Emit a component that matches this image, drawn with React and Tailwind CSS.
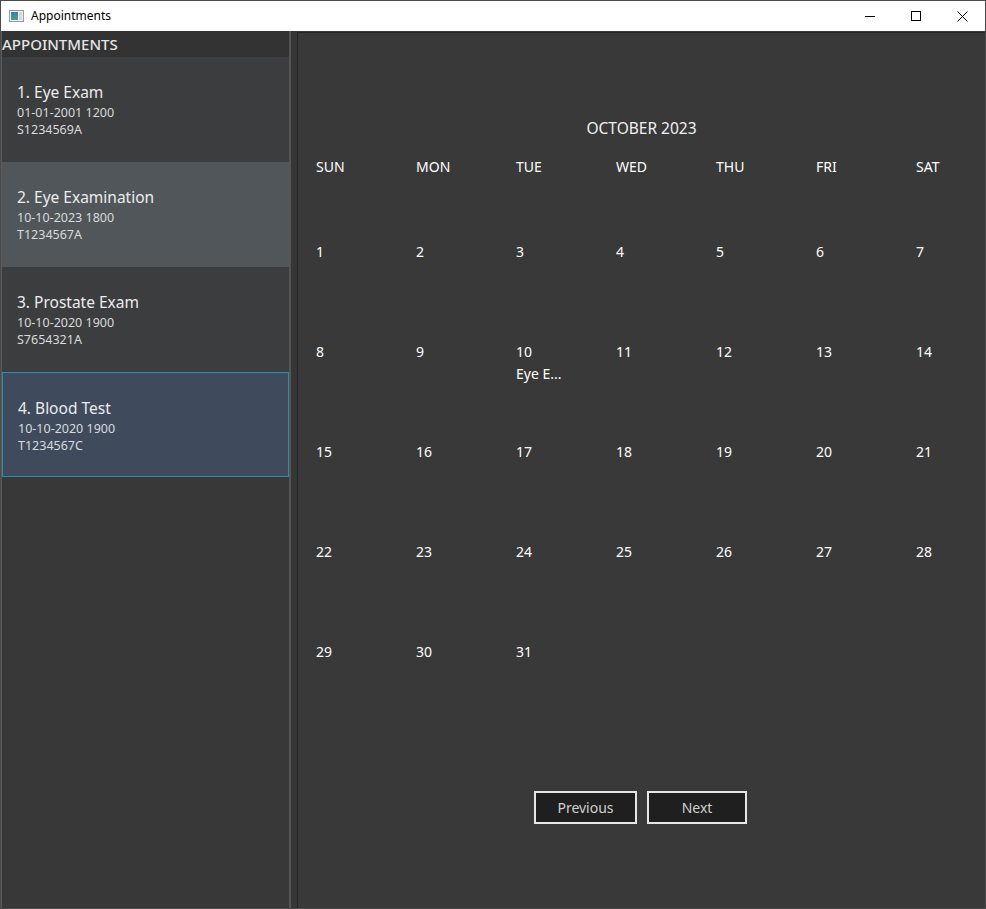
import React from "react";

const cards = [
  { t: "1. Eye Exam", d: "01-01-2001 1200", id: "S1234569A", bg: "bg-[#3c3d3f]", sel: false },
  { t: "2. Eye Examination", d: "10-10-2023 1800", id: "T1234567A", bg: "bg-[#505659]", sel: false },
  { t: "3. Prostate Exam", d: "10-10-2020 1900", id: "S7654321A", bg: "bg-[#3c3d3f]", sel: false },
  { t: "4. Blood Test", d: "10-10-2020 1900", id: "T1234567C", bg: "bg-[#3f4b5d]", sel: true },
];

const days = ["SUN", "MON", "TUE", "WED", "THU", "FRI", "SAT"];

function buildWeeks() {
  const weeks = [];
  let d = 1;
  for (let w = 0; w < 5; w++) {
    const row = [];
    for (let i = 0; i < 7; i++) {
      row.push(d <= 31 ? d : null);
      d++;
    }
    weeks.push(row);
  }
  return weeks;
}

export default function App() {
  const weeks = buildWeeks();
  return (
    <div
      className="w-[986px] h-[909px] flex flex-col border border-[#4a4a4a] bg-[#383838] overflow-hidden"
      style={{ fontFamily: '"Noto Sans", "Open Sans", sans-serif' }}
    >
      {/* Title bar */}
      <div className="h-[30px] bg-white flex items-center shrink-0">
        <div className="ml-[8px] w-[15px] h-[12px] border border-[#9a9a9a] bg-[#f2f2f2] flex items-stretch p-[1px] gap-[1px]">
          <div className="w-[7px] bg-gradient-to-b from-[#3b7ac4] to-[#4aa37a]" />
          <div className="flex-1 bg-[#d8d8d8]" />
        </div>
        <span className="ml-[7px] text-[12px] text-black leading-none">Appointments</span>
        <div className="ml-auto flex h-full">
          <div className="w-[46px] h-full flex items-center justify-center">
            <div className="w-[10px] h-[1px] bg-black" />
          </div>
          <div className="w-[46px] h-full flex items-center justify-center">
            <div className="w-[10px] h-[10px] border border-black" />
          </div>
          <div className="w-[46px] h-full flex items-center justify-center">
            <svg width="11" height="11" viewBox="0 0 11 11">
              <path d="M0.5 0.5 L10.5 10.5 M10.5 0.5 L0.5 10.5" stroke="black" strokeWidth="1" />
            </svg>
          </div>
        </div>
      </div>

      {/* Body */}
      <div className="flex flex-1 min-h-0 bg-[#383838]">
        {/* Left panel */}
        <div className="w-[288px] flex flex-col border-l-[1px] border-[#5a5a5a]">
          <div className="h-[26px] bg-[#333333] flex items-center text-[15px] text-[#e4e4e4] font-medium">
            APPOINTMENTS
          </div>
          {cards.map((c) => (
            <div
              key={c.t}
              className={`h-[105px] ${c.bg} ${c.sel ? "border border-[#2c8ea3] pl-[15px] pt-[2px]" : "pl-[15px]"} flex flex-col justify-center`}
            >
              <div className="text-[15.5px] leading-[20px] text-[#ececec] mb-[2px]">{c.t}</div>
              <div className="text-[12.5px] leading-[17px] text-[#dadada]">{c.d}</div>
              <div className="text-[12.5px] leading-[17px] text-[#dadada]">{c.id}</div>
            </div>
          ))}
        </div>

        {/* Divider */}
        <div className="w-[2px] bg-[#555555]" />
        <div className="w-[6px] bg-[#363636]" />

        {/* Calendar panel */}
        <div className="flex-1 min-w-0 bg-[#393939] border-l border-t border-[#262626] mt-[1px] flex flex-col overflow-hidden text-white">
          <div className="h-[85px]" />
          <div className="text-center text-[15.5px] leading-[20px] text-[#f0f0f0]">OCTOBER 2023</div>
          <div className="h-[19px]" />
          <div className="flex pl-[18px] text-[14px] leading-[20px]">
            {days.map((d) => (
              <div key={d} className="w-[100px] shrink-0">{d}</div>
            ))}
          </div>
          <div className="h-[65px]" />
          {weeks.map((row, wi) => (
            <div key={wi} className="flex pl-[18px] h-[100px] text-[14px] leading-[20px]">
              {row.map((d, i) => (
                <div key={i} className="w-[100px] shrink-0">
                  {d && <div>{d}</div>}
                  {d === 10 && <div className="mt-[2px]">Eye E...</div>}
                </div>
              ))}
            </div>
          ))}
          <div className="h-[49px]" />
          <div className="flex justify-center gap-[10px] pr-[2px]">
            <button className="w-[103px] h-[33px] bg-[#1f1f1f] border-2 border-[#e6e6e6] text-[14px] text-[#d0d0d0]">
              Previous
            </button>
            <button className="w-[100px] h-[33px] bg-[#1f1f1f] border-2 border-[#e6e6e6] text-[14px] text-[#d0d0d0]">
              Next
            </button>
          </div>
        </div>
      </div>
    </div>
  );
}
